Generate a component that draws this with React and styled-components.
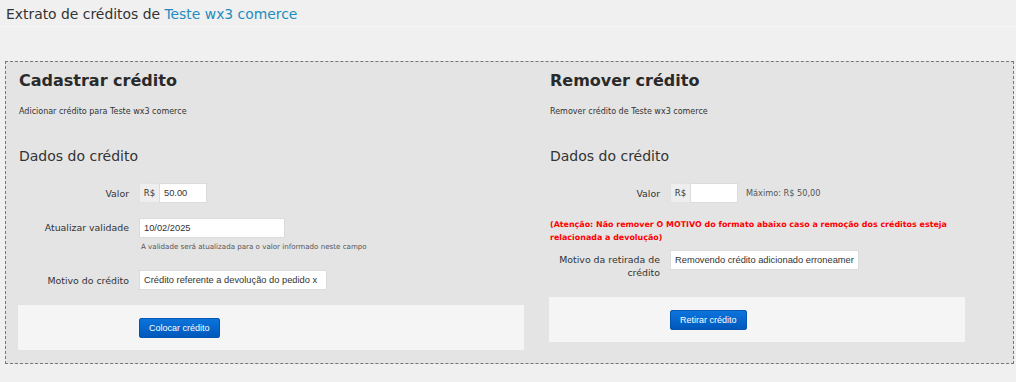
import React from 'react';
import styled, { createGlobalStyle } from 'styled-components';

const GlobalStyle = createGlobalStyle`
    body {
        margin: 0;
        background: #f0f0f0;
        font-family: "DejaVu Sans", Verdana, sans-serif;
        color: #333;
    }
`;

const Header = styled.header`
    height: 26px;
    padding: 0 6px;
    border-bottom: 1px solid #f6f6f6;
    font-size: 13.9px;
    line-height: 28px;
    color: #333;
    a {
        color: #1e8cbe;
        text-decoration: none;
    }
`, Box = styled.section`
    margin: 34px 2px 0 5px;
    padding: 9px 0 13px 13px;
    border: 1px dashed #777;
    background: #e4e4e4;
    display: grid;
    grid-template-columns: 505px 415px;
    column-gap: 26px;
    align-items: start;
`, Column = styled.div`
    display: flex;
    flex-direction: column;
`, Title = styled.h2`
    margin: 0;
    font-size: 16px;
    line-height: 20px;
    font-weight: bold;
    color: #2a2a2a;
`, Subtitle = styled.p`
    margin: 15px 0 0;
    font-size: 8px;
    line-height: 12px;
    color: #333;
`, SectionTitle = styled.h3`
    margin: 29px 0 0;
    font-size: 14px;
    line-height: 18px;
    font-weight: normal;
    color: #333;
`, Row = styled.div`
    display: grid;
    grid-template-columns: 110px auto;
    column-gap: 10px;
    align-items: ${p => p.top ? 'start' : 'center'};
    margin-top: ${p => p.gap}px;
`, Label = styled.label`
    text-align: right;
    font-size: 9.4px;
    line-height: 13px;
    color: #333;
    padding-top: ${p => p.top ? 3 : 0}px;
`, Field = styled.div`
    display: flex;
    flex-direction: column;
    align-items: flex-start;
`, Group = styled.div`
    display: flex;
    align-items: center;
`, Addon = styled.span`
    width: 20px;
    height: 20px;
    box-sizing: border-box;
    background: #eeeeee;
    border: 1px solid #e2e2e2;
    border-right: none;
    font-size: 8.5px;
    line-height: 18px;
    text-align: center;
    color: #333;
`, Input = styled.input`
    width: ${p => p.w}px;
    height: 20px;
    box-sizing: border-box;
    padding: 0 4px;
    border: 1px solid #dcdcdc;
    background: #fff;
    font-family: "Liberation Sans", Arial, sans-serif;
    font-size: 9.3px;
    color: #333;
    outline: none;
`, Hint = styled.span`
    margin-left: ${p => p.side ? 8 : 2}px;
    margin-top: ${p => p.side ? 0 : 3}px;
    font-size: ${p => p.side ? 8.2 : 7.1}px;
    line-height: 12px;
    color: #555;
`, Warning = styled.p`
    margin: 15px 0 0;
    font-size: 7.95px;
    line-height: 13px;
    font-weight: bold;
    color: #f00;
`, Actions = styled.div`
    margin-top: ${p => p.gap}px;
    margin-left: -1px;
    padding: 13px 0 12px 121px;
    background: #f5f5f5;
`, Button = styled.button`
    display: block;
    height: 20px;
    padding: 0 9px;
    border: 1px solid #0056b0;
    border-radius: 2px;
    background: linear-gradient(#0b74dc, #0058bb);
    color: #fff;
    font-family: "Liberation Sans", Arial, sans-serif;
    font-size: 9px;
    cursor: pointer;
`;

export default function App() {
    return (
        <>
            <GlobalStyle />
            <Header>Extrato de créditos de <a href="#">Teste wx3 comerce</a></Header>
            <Box>
                <Column>
                    <Title>Cadastrar crédito</Title>
                    <Subtitle>Adicionar crédito para Teste wx3 comerce</Subtitle>
                    <SectionTitle>Dados do crédito</SectionTitle>
                    <Row gap={18}>
                        <Label>Valor</Label>
                        <Group>
                            <Addon>R$</Addon>
                            <Input w={48} defaultValue="50.00" />
                        </Group>
                    </Row>
                    <Row gap={15} top>
                        <Label top>Atualizar validade</Label>
                        <Field>
                            <Input w={146} defaultValue="10/02/2025" />
                            <Hint>A validade será atualizada para o valor informado neste campo</Hint>
                        </Field>
                    </Row>
                    <Row gap={17}>
                        <Label>Motivo do crédito</Label>
                        <Input w={188} defaultValue="Crédito referente a devolução do pedido x" />
                    </Row>
                    <Actions gap={15}>
                        <Button>Colocar crédito</Button>
                    </Actions>
                </Column>
                <Column>
                    <Title>Remover crédito</Title>
                    <Subtitle>Remover crédito de Teste wx3 comerce</Subtitle>
                    <SectionTitle>Dados do crédito</SectionTitle>
                    <Row gap={18}>
                        <Label>Valor</Label>
                        <Group>
                            <Addon>R$</Addon>
                            <Input w={48} />
                            <Hint side>Máximo: R$ 50,00</Hint>
                        </Group>
                    </Row>
                    <Warning>(Atenção: Não remover O MOTIVO do formato abaixo caso a remoção dos créditos esteja relacionada a devolução)</Warning>
                    <Row gap={6} top>
                        <Label top>Motivo da retirada de crédito</Label>
                        <Input w={189} defaultValue="Removendo crédito adicionado erroneamente" />
                    </Row>
                    <Actions gap={18}>
                        <Button>Retirar crédito</Button>
                    </Actions>
                </Column>
            </Box>
        </>
    );
}
